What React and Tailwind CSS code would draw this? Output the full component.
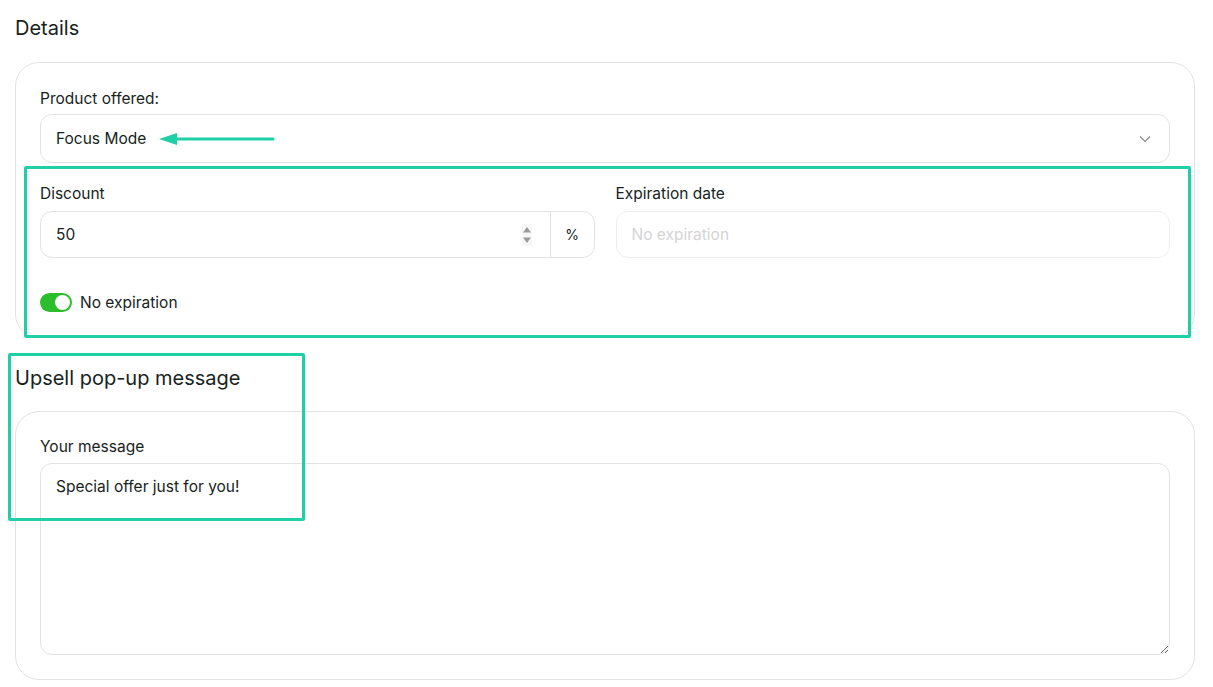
import React from 'react';

const font = { fontFamily: 'Inter, "Noto Sans", sans-serif' };

function Label({ children }) {
  return <p className="text-[15.5px] leading-5 text-[#17231c]">{children}</p>;
}

export default function App() {
  return (
    <div className="relative min-h-[687px] bg-white pl-[15px] pr-[18px] pt-[16px] text-[#17231c]" style={font}>
      <h2 className="text-[20px] leading-6 font-normal">Details</h2>

      <section className="mt-[22px] rounded-[24px] border border-[#e3e3e3] px-[24px] pt-[26px] pb-[22px]">
        <Label>Product offered:</Label>
        <div className="mt-[5px] flex h-[49px] items-center justify-between rounded-[12px] border border-[#e3e3e3] pl-[15px] pr-[18px]">
          <div className="flex items-center">
            <span className="text-[15.5px]">Focus Mode</span>
            <svg width="116" height="14" viewBox="0 0 116 14" className="ml-[13px]">
              <path d="M17 7H114" stroke="#1fcfa6" strokeWidth="3" strokeLinecap="round" />
              <path d="M0 7L18 1V13Z" fill="#1fcfa6" />
            </svg>
          </div>
          <svg width="12" height="8" viewBox="0 0 12 8">
            <path d="M1 1.5L6 6.5L11 1.5" fill="none" stroke="#8a8a8a" strokeWidth="1.2" />
          </svg>
        </div>

        <div className="mt-[21px] grid grid-cols-2 gap-[21px]">
          <div>
            <Label>Discount</Label>
            <div className="mt-[7px] flex h-[47px] rounded-[12px] border border-[#e3e3e3]">
              <div className="flex flex-1 items-center justify-between pl-[15px] pr-[18px]">
                <span className="text-[15.5px]">50</span>
                <svg width="10" height="22" viewBox="0 0 10 22">
                  <rect width="10" height="22" fill="#f7f7f7" />
                  <path d="M5 3L9 8.5H1Z" fill="#9a9a9a" />
                  <path d="M5 19L9 13.5H1Z" fill="#9a9a9a" />
                </svg>
              </div>
              <div className="flex w-[44px] items-center justify-center border-l border-[#e3e3e3] text-[14px]">%</div>
            </div>
          </div>
          <div>
            <Label>Expiration date</Label>
            <div className="mt-[7px] flex h-[47px] items-center rounded-[12px] border border-[#efefef] pl-[15px] text-[15.5px] text-[#d4d4d4]">
              No expiration
            </div>
          </div>
        </div>

        <div className="mt-[33px] mb-[1px] flex items-center gap-[8px]">
          <div className="flex h-[19px] w-[32px] items-center justify-end rounded-full bg-[#2cbd2c] p-[2px]">
            <div className="h-[15px] w-[15px] rounded-full bg-white" />
          </div>
          <span className="text-[15.5px]">No expiration</span>
        </div>
      </section>

      <h2 className="mt-[28px] text-[20px] leading-6 font-normal">Upsell pop-up message</h2>

      <section className="mt-[21px] rounded-[24px] border border-[#e3e3e3] px-[24px] pt-[25px] pb-[24px]">
        <Label>Your message</Label>
        <textarea
          defaultValue="Special offer just for you!"
          className="mt-[6px] block h-[192px] w-full resize-y rounded-[12px] border border-[#e3e3e3] px-[15px] pt-[13px] text-[15.5px] leading-5 text-[#17231c] outline-none"
          style={font}
        />
      </section>

      <div className="pointer-events-none absolute left-[24px] top-[166px] h-[172px] w-[1167px] rounded-[2px] border-[3px] border-[#1fcfa6]" />
      <div className="pointer-events-none absolute left-[8px] top-[353px] h-[168px] w-[297px] rounded-[2px] border-[3px] border-[#1fcfa6]" />
    </div>
  );
}
